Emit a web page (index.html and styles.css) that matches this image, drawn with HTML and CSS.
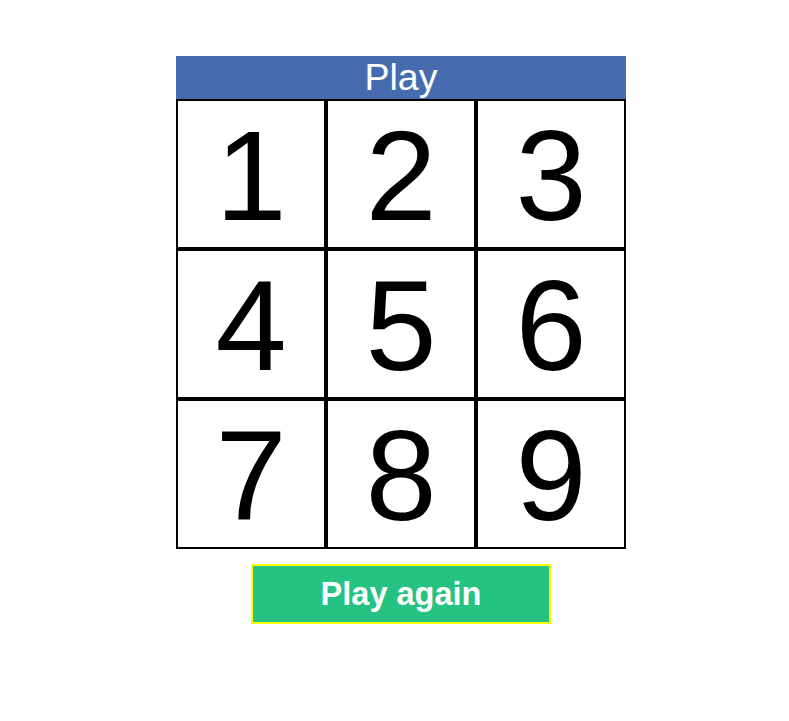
FILE: index.html
```html
<!DOCTYPE html>
<html>
<head>
<meta charset="utf-8">
<title>Play</title>
<link rel="stylesheet" href="styles.css">
</head>
<body>
<div class="app">
  <div class="board">
    <div class="title">Play</div>
    <div class="grid">
      <div class="cell">1</div>
      <div class="cell">2</div>
      <div class="cell">3</div>
      <div class="cell">4</div>
      <div class="cell">5</div>
      <div class="cell">6</div>
      <div class="cell">7</div>
      <div class="cell">8</div>
      <div class="cell">9</div>
    </div>
  </div>
  <button class="again">Play again</button>
</div>
</body>
</html>
```
FILE: styles.css
```css
html, body {
  margin: 0;
  padding: 0;
  background: #ffffff;
  font-family: "Liberation Sans", Arial, sans-serif;
}
.app {
  width: 802px;
  padding-top: 56px;
  display: flex;
  flex-direction: column;
  align-items: center;
}
.board {
  width: 450px;
}
.title {
  height: 43px;
  background: #466caf;
  color: #ffffff;
  font-size: 37.5px;
  line-height: 43px;
  text-align: center;
}
.grid {
  display: grid;
  grid-template-columns: repeat(3, 150px);
  grid-auto-rows: 150px;
}
.cell {
  box-sizing: border-box;
  border: 2px solid #000000;
  display: flex;
  align-items: center;
  justify-content: center;
  font-size: 128px;
  color: #000000;
  line-height: 1;
  padding-top: 3px;
}
.again {
  margin-top: 15px;
  width: 300px;
  height: 60px;
  background: #26c281;
  border: 2px solid #ffff00;
  color: #ffffff;
  font-family: "Liberation Sans", Arial, sans-serif;
  font-weight: bold;
  font-size: 32.5px;
  padding: 0;
}
```
